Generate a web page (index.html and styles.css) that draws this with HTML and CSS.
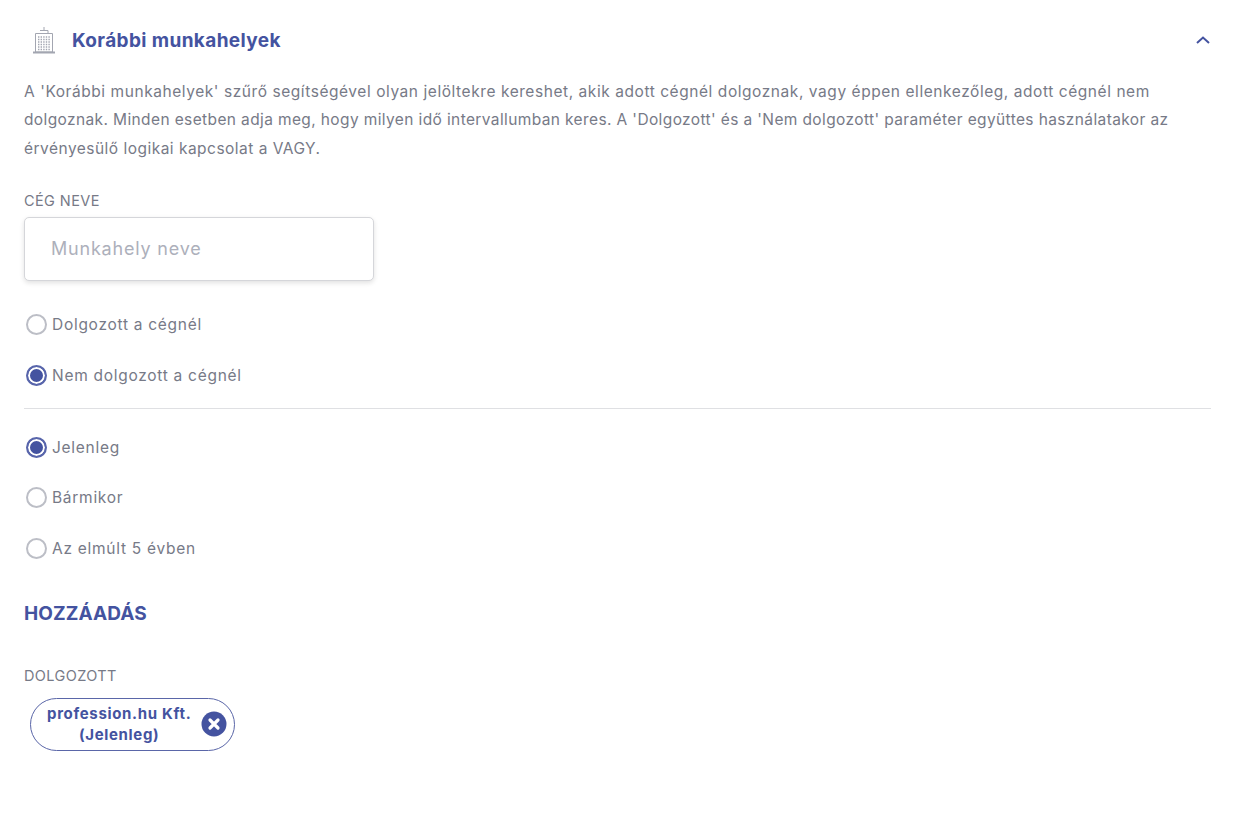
FILE: index.html
```html
<!DOCTYPE html>
<html lang="hu">
<head>
<meta charset="utf-8">
<title>Korábbi munkahelyek</title>
<link rel="stylesheet" href="styles.css">
</head>
<body>
<main class="panel">
  <header class="head">
    <svg class="bldg" width="24" height="28" viewBox="0 0 24 28" fill="none" stroke="#a3a6b1" stroke-width="1">
      <path d="M12 1v3M8 4.500h8v3M3.500 7.500h17V26h-17z"/>
      <path d="M1 26.500h22" stroke-width="2"/>
      <path d="M6 11h12M6 13.500h12M6 16h12M6 18.500h12M6 21h12M6 23.500h12" stroke-width="1.300" stroke-dasharray="1.400 1.200"/>
    </svg>
    <h1 class="title">Korábbi munkahelyek</h1>
    <svg class="chev" width="16" height="10" viewBox="0 0 16 10" fill="none" stroke="#4453a0" stroke-width="2">
      <path d="M2 8l6-5.500L14 8"/>
    </svg>
  </header>
  <p class="intro"><span class="line">A 'Korábbi munkahelyek' szűrő segítségével olyan jelöltekre kereshet, akik adott cégnél dolgoznak, vagy éppen ellenkezőleg, adott cégnél nem</span><span class="line line-2">dolgoznak. Minden esetben adja meg, hogy milyen idő intervallumban keres. A 'Dolgozott' és a 'Nem dolgozott' paraméter együttes használatakor az</span><span class="line line-3">érvényesülő logikai kapcsolat a VAGY.</span></p>
  <div class="lbl first-lbl">CÉG NEVE</div>
  <div class="input">Munkahely neve</div>
  <div class="radios company">
    <label class="radio"><span class="dot"></span>Dolgozott a cégnél</label>
    <label class="radio"><span class="dot on"></span>Nem dolgozott a cégnél</label>
  </div>
  <hr class="rule">
  <div class="radios period">
    <label class="radio"><span class="dot on"></span>Jelenleg</label>
    <label class="radio"><span class="dot"></span>Bármikor</label>
    <label class="radio"><span class="dot"></span>Az elmúlt 5 évben</label>
  </div>
  <h2 class="add">HOZZÁADÁS</h2>
  <div class="lbl">DOLGOZOTT</div>
  <div class="chip">
    <span class="chip-text">profession.hu Kft.<br>(Jelenleg)</span>
    <svg class="x" width="26" height="26" viewBox="0 0 26 26">
      <circle cx="13" cy="13" r="12.500" fill="#4453a0"/>
      <path d="M9 9l8 8M17 9l-8 8" stroke="#fff" stroke-width="3.200" stroke-linecap="round"/>
    </svg>
  </div>
</main>
</body>
</html>
```
FILE: styles.css
```css
* { box-sizing: border-box; }
html, body { margin: 0; background: #fff; }
body {
  font-family: Inter, "Open Sans", "Liberation Sans", sans-serif;
  color: #777a87;
  width: 1235px;
  height: 827px;
  overflow: hidden;
}
.panel { padding: 0 24px 0 24px; }
.head {
  display: flex;
  align-items: center;
  height: 80px;
  padding: 0 0 0 8px;
}
.bldg { flex: none; }
.title {
  flex: 1;
  margin: 0 0 0 16px;
  font-size: 19px;
  font-weight: 700;
  color: #4453a0;
  letter-spacing: 0.38px;
}
.chev { flex: none; margin-right: 0; }
.intro {
  margin: -2.500px 0 0;
  font-size: 15.500px;
  line-height: 28.500px;
  letter-spacing: 0.56px;
  white-space: nowrap;
}
.line { display: block; }
.line-2 { letter-spacing: 0.38px; }
.line-3 { letter-spacing: 0.48px; }
.lbl {
  font-size: 14.500px;
  line-height: 18px;
  letter-spacing: 0.4px;
  color: #777a87;
}
.first-lbl { margin-top: 28.500px; }
.input {
  width: 350px;
  height: 64px;
  margin-top: 7px;
  padding-left: 26px;
  display: flex;
  align-items: center;
  font-size: 18px;
  letter-spacing: 0.8px;
  color: #adb0bb;
  background: #fff;
  border: 1px solid #d5d6da;
  border-radius: 5px;
  box-shadow: 0 2px 5px rgba(0,0,0,.12);
}
.radios { display: flex; flex-direction: column; }
.company { margin-top: 31px; gap: 25px; }
.period { margin-top: 25.500px; gap: 24.500px; }
.radio {
  display: flex;
  align-items: center;
  gap: 5px;
  padding-left: 2px;
  height: 26px;
  font-size: 15.500px;
  letter-spacing: 0.72px;
}
.dot {
  flex: none;
  width: 21px;
  height: 21px;
  border: 2px solid #bcbec6;
  border-radius: 50%;
  background: #fff;
}
.dot.on {
  border-color: #5865ab;
  background: #4453a0;
  box-shadow: inset 0 0 0 2px #fff;
}
.rule {
  margin: 19px 0 0;
  border: 0;
  border-top: 1px solid #dfe0e3;
}
.add {
  margin: 40.500px 0 0;
  font-size: 19px;
  line-height: 24px;
  font-weight: 700;
  letter-spacing: 0.1px;
  color: #4453a0;
}
.lbl + .chip { margin-top: 13px; }
.add + .lbl { margin-top: 41px; }
.chip {
  display: inline-flex;
  align-items: center;
  gap: 10px;
  margin-left: 6px;
  width: 205px;
  height: 53px;
  padding: 0 7px 0 16px;
  border: 1px solid #5a66a8;
  border-radius: 27px;
  background: #fff;
}
.chip-text {
  flex: 1;
  text-align: center;
  font-size: 15px;
  font-weight: 700;
  line-height: 21px;
  letter-spacing: 0.67px;
  color: #4453a0;
  white-space: nowrap;
}
.x { flex: none; }
```
